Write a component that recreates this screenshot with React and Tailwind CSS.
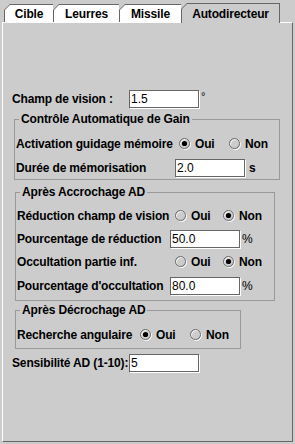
import React from 'react';

const tabs = [
  { label: 'Cible', w: 49 },
  { label: 'Leurres', w: 66 },
  { label: 'Missile', w: 62 },
  { label: 'Autodirecteur', w: 98, selected: true },
];

function Tab({ label, w, selected }) {
  return (
    <div
      className={`relative shrink-0 bg-[#666] [clip-path:polygon(6px_0,100%_0,100%_100%,0_100%,0_6px)] ${
        selected ? 'z-10 -mb-px h-[20px] pr-px' : 'h-[18px]'
      }`}
      style={{ width: w + (selected ? 1 : 0) }}
    >
      <div
        className={`ml-px mt-px flex h-full items-center justify-center [clip-path:polygon(5px_0,100%_0,100%_100%,0_100%,0_5px)] ${
          selected ? 'bg-[#cccccc]' : 'bg-white'
        }`}
      >
        <span className="text-[12px] font-bold leading-none text-black">{label}</span>
      </div>
    </div>
  );
}

function Field({ value }) {
  return (
    <div className="flex h-[18px] w-[70px] shrink-0 items-center border border-[#666] bg-white pl-px text-[12px] font-normal leading-none tracking-normal text-black shadow-[1px_1px_0_#fff]">
      {value}
    </div>
  );
}

function Radio({ label, checked, w }) {
  return (
    <div className="flex shrink-0 items-center gap-[4px]" style={{ width: w }}>
      <svg width="12" height="12" viewBox="0 0 12 12" className="shrink-0">
        <circle cx="6.5" cy="6.5" r="5" fill="none" stroke="#fff" />
        <circle cx="5.5" cy="5.5" r="5" fill="none" stroke="#6a6a6a" />
        {checked && <circle cx="5.5" cy="5.5" r="2.6" fill="#000" />}
      </svg>
      <span>{label}</span>
    </div>
  );
}

function Group({ title, className, children }) {
  return (
    <fieldset className={`border border-[#999] ${className}`}>
      <legend className="ml-[3px] px-[2px] text-[12px] font-bold leading-[14px]">{title}</legend>
      {children}
    </fieldset>
  );
}

export default function App() {
  return (
    <div className="flex h-[444px] w-[295px] flex-col overflow-hidden bg-[#cccccc] font-['Liberation_Sans',Arial,sans-serif] text-[12px] font-bold tracking-[-0.15px] text-black">
      <div className="flex h-[22px] shrink-0 items-end pl-[4px]">
        {tabs.map((t) => (
          <Tab key={t.label} {...t} />
        ))}
      </div>

      <div className="mx-[2px] flex h-[420px] shrink-0 flex-col border border-white border-b-[#666] border-r-[#666]">
        <div className="mt-[67px] flex h-[18px] items-center pl-[9px]">
          <span className="w-[117px] shrink-0 whitespace-nowrap">Champ de vision :</span>
          <Field value="1.5" />
          <span className="ml-[2px] self-start text-[11px] font-normal leading-[12px]">°</span>
        </div>

        <Group title="Contrôle Automatique de Gain" className="ml-[11px] mt-[4px] w-[260px] pb-px pl-px pt-[8px]">
          <div className="flex h-[20px] items-center">
            <span className="w-[163px] shrink-0 whitespace-nowrap">Activation guidage mémoire</span>
            <Radio label="Oui" checked w={50} />
            <Radio label="Non" w={50} />
          </div>
          <div className="mt-[4px] flex h-[20px] items-center">
            <span className="w-[159px] shrink-0 whitespace-nowrap">Durée de mémorisation</span>
            <Field value="2.0" />
            <span className="ml-[4px]">s</span>
          </div>
        </Group>

        <Group title="Après Accrochage AD" className="ml-[12px] mt-[5px] w-[260px] pb-[4px] pl-px pt-[7px]">
          <div className="flex h-[20px] items-center">
            <span className="w-[158px] shrink-0 whitespace-nowrap">Réduction champ de vision</span>
            <Radio label="Oui" w={48} />
            <Radio label="Non" checked w={48} />
          </div>
          <div className="mt-[3px] flex h-[20px] items-center">
            <span className="w-[153px] shrink-0 whitespace-nowrap">Pourcentage de réduction</span>
            <Field value="50.0" />
            <span className="ml-[2px] font-normal">%</span>
          </div>
          <div className="mt-[3px] flex h-[20px] items-center">
            <span className="w-[158px] shrink-0 whitespace-nowrap">Occultation partie inf.</span>
            <Radio label="Oui" w={48} />
            <Radio label="Non" checked w={48} />
          </div>
          <div className="mt-[4px] flex h-[20px] items-center">
            <span className="w-[153px] shrink-0 whitespace-nowrap">Pourcentage d'occultation</span>
            <Field value="80.0" />
            <span className="ml-[2px] font-normal">%</span>
          </div>
        </Group>

        <Group title="Après Décrochage AD" className="ml-[12px] mt-[2px] w-[224px] pb-[3px] pl-px pt-[8px]">
          <div className="flex h-[20px] items-center">
            <span className="w-[123px] shrink-0 whitespace-nowrap">Recherche angulaire</span>
            <Radio label="Oui" checked w={50} />
            <Radio label="Non" w={50} />
          </div>
        </Group>

        <div className="mt-[5px] flex h-[18px] items-center pl-[9px]">
          <span className="w-[117px] shrink-0 whitespace-nowrap">Sensibilité AD (1-10):</span>
          <Field value="5" />
        </div>
      </div>
    </div>
  );
}
